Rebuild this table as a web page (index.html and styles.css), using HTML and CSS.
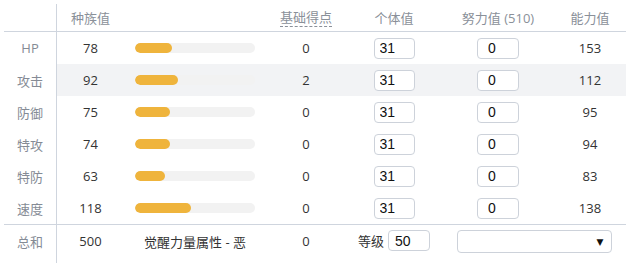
FILE: index.html
```html
<!DOCTYPE html>
<html lang="zh">
<head>
<meta charset="utf-8">
<link rel="stylesheet" href="styles.css">
</head>
<body>
<div class="stats">
  <div class="row head">
    <div class="c lab"></div>
    <div class="c base">种族值</div>
    <div class="c bar"></div>
    <div class="c pts"><span class="dash">基础得点</span></div>
    <div class="c iv">个体值</div>
    <div class="c ev">努力值 (510)</div>
    <div class="c st">能力值</div>
  </div>
  <div class="row">
    <div class="c lab">HP</div><div class="c base">78</div>
    <div class="c bar"><div class="track"><div class="fill" style="width:36.7px"></div></div></div>
    <div class="c pts">0</div>
    <div class="c iv"><input class="in iv-in" value="31"></div>
    <div class="c ev"><input class="in ev-in" value="0"></div>
    <div class="c st">153</div>
  </div>
  <div class="row alt">
    <div class="c lab">攻击</div><div class="c base">92</div>
    <div class="c bar"><div class="track"><div class="fill" style="width:43.3px"></div></div></div>
    <div class="c pts">2</div>
    <div class="c iv"><input class="in iv-in" value="31"></div>
    <div class="c ev"><input class="in ev-in" value="0"></div>
    <div class="c st">112</div>
  </div>
  <div class="row">
    <div class="c lab">防御</div><div class="c base">75</div>
    <div class="c bar"><div class="track"><div class="fill" style="width:35.3px"></div></div></div>
    <div class="c pts">0</div>
    <div class="c iv"><input class="in iv-in" value="31"></div>
    <div class="c ev"><input class="in ev-in" value="0"></div>
    <div class="c st">95</div>
  </div>
  <div class="row">
    <div class="c lab">特攻</div><div class="c base">74</div>
    <div class="c bar"><div class="track"><div class="fill" style="width:34.8px"></div></div></div>
    <div class="c pts">0</div>
    <div class="c iv"><input class="in iv-in" value="31"></div>
    <div class="c ev"><input class="in ev-in" value="0"></div>
    <div class="c st">94</div>
  </div>
  <div class="row">
    <div class="c lab">特防</div><div class="c base">63</div>
    <div class="c bar"><div class="track"><div class="fill" style="width:29.6px"></div></div></div>
    <div class="c pts">0</div>
    <div class="c iv"><input class="in iv-in" value="31"></div>
    <div class="c ev"><input class="in ev-in" value="0"></div>
    <div class="c st">83</div>
  </div>
  <div class="row">
    <div class="c lab">速度</div><div class="c base">118</div>
    <div class="c bar"><div class="track"><div class="fill" style="width:55.5px"></div></div></div>
    <div class="c pts">0</div>
    <div class="c iv"><input class="in iv-in" value="31"></div>
    <div class="c ev"><input class="in ev-in" value="0"></div>
    <div class="c st">138</div>
  </div>
  <div class="row total">
    <div class="c lab">总和</div><div class="c base">500</div>
    <div class="c bar hp">觉醒力量属性&nbsp;-&nbsp;恶</div>
    <div class="c pts">0</div>
    <div class="c iv lvl">等级<input class="in lv-in" value="50"></div>
    <div class="c sel"><div class="select"><span class="arrow">▼</span></div></div>
  </div>
</div>
</body>
</html>
```
FILE: styles.css
```css
html, body { margin: 0; padding: 0; background: #fff; }
body {
  font-family: "Open Sans", "Noto Sans CJK SC", sans-serif;
  font-size: 13px;
  color: #333;
}
.stats { padding: 4px 0 0 4px; width: 622px; }
.row {
  display: grid;
  grid-template-columns: 53px 67px 142px 80px 96px 112px 72px;
  height: 32px;
  align-items: stretch;
}
.c { display: flex; align-items: center; justify-content: center; }
.lab { border-right: 1px solid #cfd5de; color: #858b95; }
.st { color: #333; }
.head { height: 27px; border-bottom: 1px solid #cfd5de; }
.head .c { color: #8a9099; }
.dash { border-bottom: 1px dashed #8a9099; line-height: 17px; }
.alt .c:not(.lab) { background: #f2f3f5; }
.bar { justify-content: flex-start; padding-left: 11px; }
.track { width: 120px; height: 10px; border-radius: 5px; background: #f2f2f2; overflow: hidden; }
.fill { height: 10px; border-radius: 5px; background: #efb43c; }
.in {
  box-sizing: border-box;
  height: 21px;
  border: 1px solid #cdd2da;
  border-radius: 4px;
  background: #fff;
  font-family: "Liberation Sans", Arial, sans-serif;
  font-size: 14px;
  color: #111;
  padding: 0 0 0 5px;
  margin: 0;
  outline: none;
}
.iv-in { width: 41px; }
.ev-in { width: 42px; padding-left: 10px; }
.total { border-top: 1px solid #cfd5de; height: 38px; }
.total .c { align-items: flex-start; padding-top: 7px; }
.hp { justify-content: center; padding-left: 0; }
.lvl { gap: 4px; padding-top: 6px !important; }
.lvl .in { margin-top: -1px; }
.lv-in { width: 42px; padding-left: 6px; }
.sel { grid-column: 6 / 8; }
.select {
  box-sizing: border-box;
  width: 155px;
  height: 23px;
  margin-top: -2px;
  border: 1px solid #cdd2da;
  border-radius: 4px;
  display: flex;
  align-items: center;
  justify-content: flex-end;
  padding-right: 7px;
}
.arrow { font-size: 9px; color: #111; font-family: "DejaVu Sans", sans-serif; }
```
